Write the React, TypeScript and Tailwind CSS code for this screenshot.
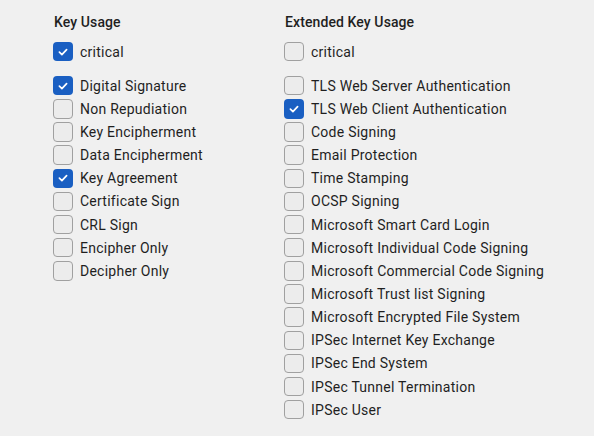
import React from "react";

type Item = { label: string; checked?: boolean };

const keyUsage: Item[] = [
  { label: "Digital Signature", checked: true },
  { label: "Non Repudiation" },
  { label: "Key Encipherment" },
  { label: "Data Encipherment" },
  { label: "Key Agreement", checked: true },
  { label: "Certificate Sign" },
  { label: "CRL Sign" },
  { label: "Encipher Only" },
  { label: "Decipher Only" },
];

const extKeyUsage: Item[] = [
  { label: "TLS Web Server Authentication" },
  { label: "TLS Web Client Authentication", checked: true },
  { label: "Code Signing" },
  { label: "Email Protection" },
  { label: "Time Stamping" },
  { label: "OCSP Signing" },
  { label: "Microsoft Smart Card Login" },
  { label: "Microsoft Individual Code Signing" },
  { label: "Microsoft Commercial Code Signing" },
  { label: "Microsoft Trust list Signing" },
  { label: "Microsoft Encrypted File System" },
  { label: "IPSec Internet Key Exchange" },
  { label: "IPSec End System" },
  { label: "IPSec Tunnel Termination" },
  { label: "IPSec User" },
];

function Box({ checked }: { checked?: boolean }) {
  return checked ? (
    <span className="flex h-[19.5px] w-5 shrink-0 items-center justify-center rounded-[4px] bg-[#1a5fc2]">
      <svg width="12" height="12" viewBox="0 0 12 12" fill="none">
        <path d="M2.4 6.2 L4.9 8.6 L9.6 3.6" stroke="white" strokeWidth="1.7" strokeLinecap="round" strokeLinejoin="round" />
      </svg>
    </span>
  ) : (
    <span className="block h-[19.5px] w-5 shrink-0 rounded-[4px] border border-[#a0a0a0] bg-[#ececec]" />
  );
}

function Row({ item }: { item: Item }) {
  return (
    <div className="flex h-[23.15px] items-center gap-[7px]">
      <Box checked={item.checked} />
      <span className="text-[14px] leading-none tracking-[0.25px] text-[#1f1f1f]">{item.label}</span>
    </div>
  );
}

function Column({ title, critical, items, width }: { title: string; critical?: boolean; items: Item[]; width: string }) {
  return (
    <div className={width}>
      <div className="flex h-5 items-center pl-px text-[14px] font-medium tracking-[0.1px] text-[#1f1f1f]">{title}</div>
      <div className="mt-2">
        <Row item={{ label: "critical", checked: critical }} />
      </div>
      <div className="mt-[11px] flex flex-col">
        {items.map((it) => (
          <Row key={it.label} item={it} />
        ))}
      </div>
    </div>
  );
}

export default function App() {
  return (
    <div
      className="flex h-[436px] w-[594px] bg-[#f0f0f0] pl-[53px] pt-3"
      style={{ fontFamily: "Roboto, 'Noto Sans', sans-serif" }}
    >
      <Column title="Key Usage" critical items={keyUsage} width="w-[231px]" />
      <Column title="Extended Key Usage" items={extKeyUsage} width="w-[300px]" />
    </div>
  );
}
